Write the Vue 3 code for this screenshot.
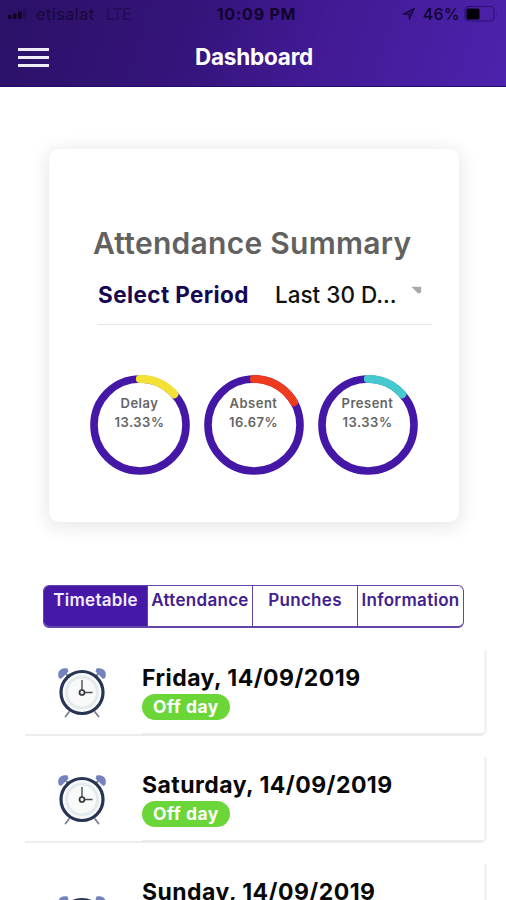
<script setup>
const R = 46
const C = 2 * Math.PI * R
const rings = [
  { label: 'Delay', value: 13.33, color: '#f3e233' },
  { label: 'Absent', value: 16.67, color: '#ee3b1f' },
  { label: 'Present', value: 13.33, color: '#45c9cf' },
]
const tabs = ['Timetable', 'Attendance', 'Punches', 'Information']
const days = ['Friday, 14/09/2019', 'Saturday, 14/09/2019', 'Sunday, 14/09/2019']
</script>

<template>
  <div class="screen">
    <header class="header">
      <div class="status">
        <div class="carrier">
          <svg class="signal" width="20" height="12" viewBox="0 0 20 12">
            <rect x="0" y="7" width="3.6" height="4" rx="1" />
            <rect x="5" y="5.5" width="3.6" height="5.5" rx="1" />
            <rect x="10" y="3.5" width="3.6" height="7.5" rx="1" />
            <rect x="15" y="1" width="3.6" height="10" rx="1" opacity=".25" />
          </svg>
          <span class="name">etisalat</span>
          <span class="lte">LTE</span>
        </div>
        <div class="clock">10:09 PM</div>
        <div class="power">
          <svg width="14" height="14" viewBox="0 0 14 14">
            <path d="M1.3 7.1 12.2 1.6 7.4 12.2 7 7.3Z" fill="#1c0a4d" fill-opacity=".55" stroke="#150638" stroke-width="1.1" stroke-linejoin="round" />
          </svg>
          <span class="pct">46%</span>
          <svg class="battery" width="36" height="18" viewBox="0 0 36 18">
            <rect x="1" y="1.5" width="29" height="14.5" rx="4" fill="none" stroke="#2c1176" stroke-width="1.2" />
            <rect x="2.5" y="3.5" width="13" height="11" rx="1.5" fill="#020006" />
            <path d="M32.5 6.5q1.5 2 0 4.5z" fill="#2c1176" />
          </svg>
        </div>
      </div>
      <div class="nav">
        <div class="menu"><i></i><i></i><i></i></div>
        <h1>Dashboard</h1>
        <div></div>
      </div>
    </header>

    <section class="summary">
      <h2>Attendance Summary</h2>
      <div class="period">
        <span class="period-label">Select Period</span>
        <span class="period-value">Last 30 D...</span>
        <svg class="caret" width="11" height="9" viewBox="0 0 11 9"><path d="M.5.8h9.7v5l-1.4 1.700-2.300-.4z" fill="#a9a9a9" /></svg>
      </div>
      <div class="rings">
        <div v-for="r in rings" :key="r.label" class="ring">
          <svg width="100" height="100" viewBox="0 0 100 100">
            <circle cx="50" cy="50" :r="R" fill="none" stroke="#4517a6" stroke-width="7.6" />
            <circle
              cx="50" cy="50" :r="R" fill="none" :stroke="r.color" stroke-width="8.2" stroke-linecap="round"
              :stroke-dasharray="`${(C * r.value) / 100} ${C}`" transform="rotate(-90 50 50)"
            />
          </svg>
          <div class="ring-text">
            <span>{{ r.label }}</span>
            <span>{{ r.value }}%</span>
          </div>
        </div>
      </div>
    </section>

    <nav class="tabs">
      <div v-for="(t, i) in tabs" :key="t" class="tab" :class="{ active: i === 0 }"><span>{{ t }}</span></div>
    </nav>

    <main class="list">
      <article v-for="d in days" :key="d" class="day">
        <div class="picture">
          <svg width="50" height="52" viewBox="0 0 50 52">
            <path d="M12 45 8.500 49.500M38 45l3.500 4.500M9 7l5 5M41 7l-5 5" stroke="#777f91" stroke-width="1.8" stroke-linecap="round" />
            <path d="M1.500 10C0 4 4 0 10.500 1.500L11.500 4.500l-7 7C3 12 2 11.500 1.500 10Z" fill="#7482bd" />
            <path d="M48.500 10c1.500-6-2.500-10-9-8.500L38.500 4.500l7 7c1.500.5 2.500 0 3-1.500Z" fill="#7482bd" />
            <circle cx="25" cy="25.500" r="21" fill="#f8fafb" stroke="#293353" stroke-width="3.200" />
            <circle cx="25" cy="25.500" r="15.500" fill="#f8fafa" stroke="#e3eaed" stroke-width="3" />
            <path d="M25 23V13M28 25.500h7.500" stroke="#4b4c54" stroke-width="1.400" />
            <circle cx="25" cy="25.500" r="2.500" fill="#eee" stroke="#35363d" stroke-width="1.700" />
          </svg>
        </div>
        <div class="info">
          <strong>{{ d }}</strong>
          <span class="badge">Off day</span>
        </div>
      </article>
    </main>
  </div>
</template>

<style>
body { margin: 0; overflow: hidden; background: #fff; }
</style>

<style scoped>
.screen { width: 506px; height: 900px; overflow: hidden; background: #fff; font-family: Inter, "Liberation Sans", sans-serif; white-space: nowrap; }
.header { height: 87px; box-sizing: border-box; border-bottom: 1px solid #210b69; background: linear-gradient(108deg, #2b1167 0%, #35147b 38%, #411a94 62%, #4d22ac 100%); }
.status { height: 28px; display: grid; grid-template-columns: 1fr auto 1fr; align-items: center; font-size: 16px; color: #11052d; }
.carrier { display: flex; align-items: center; padding-left: 8px; }
.signal { fill: #0c031f; }
.name { margin-left: 8px; color: #1a0a40; letter-spacing: .45px; font-weight: 500; }
.lte { margin-left: 11px; color: #220d50; font-weight: 400; letter-spacing: -.8px; }
.clock { font-weight: 700; letter-spacing: .8px; padding-left: 7px; }
.power { display: flex; align-items: center; justify-content: flex-end; padding-right: 6px; }
.pct { margin: 0 4px 0 7px; font-weight: 500; letter-spacing: .3px; }
.nav { height: 57px; display: grid; grid-template-columns: 1fr auto 1fr; align-items: center; padding: 0 18px; }
.menu { width: 31px; display: flex; flex-direction: column; gap: 5px; padding-top: 2px; }
.menu i { height: 3px; background: #f1ecfb; }
h1 { margin: 0; color: #fff; font-size: 22.5px; line-height: 28px; font-weight: 700; letter-spacing: -.2px; padding-left: 2px; }
.summary { box-sizing: border-box; width: 410px; height: 373px; margin: 62px 0 0 49px; padding: 73px 27px 0 41px; border-radius: 10px; background: #fff; box-shadow: 0 3px 18px 3px rgba(0, 0, 0, .09); }
h2 { margin: 0 0 0 3px; font-size: 30px; line-height: 42px; font-weight: 600; letter-spacing: .28px; color: #616161; }
.period { display: flex; height: 61px; box-sizing: border-box; margin-left: 8px; align-items: center; border-bottom: 1px solid #e4e4e4; font-size: 22.5px; }
.period-label { width: 177px; color: #150752; font-weight: 700; letter-spacing: .4px; }
.period-value { width: 136px; color: #111; font-weight: 500; letter-spacing: 0; }
.caret { margin-bottom: 7px; }
.rings { display: flex; gap: 14px; margin-top: 50px; }
.ring { position: relative; width: 100px; height: 100px; }
.ring svg { display: block; }
.ring-text { position: absolute; inset: 19px 1px auto 0; display: flex; flex-direction: column; align-items: center; font-size: 13px; line-height: 19px; font-weight: 600; color: #656565; letter-spacing: .5px; }
.tabs { display: grid; grid-template-columns: 104px 105px 105px 1fr; box-sizing: border-box; width: 421px; height: 43px; margin: 63px 0 0 43px; border: 1px solid #6344a9; border-bottom-width: 2px; border-radius: 6px; overflow: hidden; }
.tab { display: flex; justify-content: center; padding-top: 3px; border-right: 1px solid #6344a9; color: #43208f; font-size: 17px; line-height: 22px; font-weight: 600; letter-spacing: .3px; }
.tab:last-child { border-right: 0; }
.tab.active { background: #4518a8; color: #f2ecff; }
.list { display: flex; flex-direction: column; gap: 21px; margin: 22px 0 0 25px; }
.day { display: flex; box-sizing: border-box; width: 462px; height: 86px; border-right: 3px solid #f3f3f3; border-radius: 0 0 6px 0; }
.picture { width: 117px; padding: 17px 0 0 32px; box-sizing: border-box; border-bottom: 2px solid #ededed; }
.day:last-child .picture { padding-top: 31px; }
.info { flex: 1; display: flex; flex-direction: column; align-items: flex-start; padding: 14px 0 0; border-bottom: 3px solid #ebebeb; border-radius: 0 0 4px 0; }
.info strong { color: #080808; font-size: 23px; line-height: 28px; font-weight: 700; letter-spacing: .46px; }
.badge { box-sizing: border-box; width: 88px; height: 26px; margin-top: 2px; border-radius: 13px; background: #6bd638; color: #fff; font-size: 17.5px; line-height: 26px; font-weight: 700; letter-spacing: .5px; text-align: center; }
</style>
